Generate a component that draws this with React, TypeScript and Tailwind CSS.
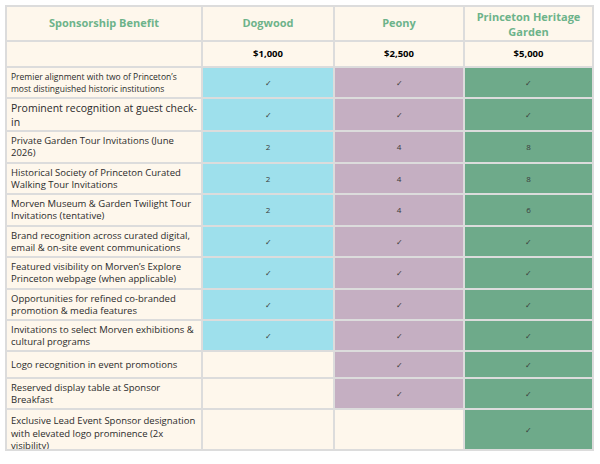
import type { ReactNode } from "react"

type Mark = "✓" | "2" | "4" | "6" | "8" | ""

interface Row {
  label: string
  size?: "sm" | "lg"
  h: string
  clip?: boolean
  values: [Mark, Mark, Mark]
}

const ROWS: Row[] = [
  { label: "Premier alignment with two of Princeton’s most distinguished historic institutions", size: "sm", h: "h-[29px]", values: ["✓", "✓", "✓"] },
  { label: "Prominent recognition at guest check-in", size: "lg", h: "h-[31px]", values: ["✓", "✓", "✓"] },
  { label: "Private Garden Tour Invitations (June 2026)", h: "h-[30px]", values: ["2", "4", "8"] },
  { label: "Historical Society of Princeton Curated Walking Tour Invitations", h: "h-[29px]", values: ["2", "4", "8"] },
  { label: "Morven Museum & Garden Twilight Tour Invitations (tentative)", h: "h-[30px]", values: ["2", "4", "6"] },
  { label: "Brand recognition across curated digital, email & on-site event communications", h: "h-[29px]", values: ["✓", "✓", "✓"] },
  { label: "Featured visibility on Morven’s Explore Princeton webpage (when applicable)", h: "h-[30px]", values: ["✓", "✓", "✓"] },
  { label: "Opportunities for refined co-branded promotion & media features", h: "h-[29px]", values: ["✓", "✓", "✓"] },
  { label: "Invitations to select Morven exhibitions & cultural programs", h: "h-[29px]", values: ["✓", "✓", "✓"] },
  { label: "Logo recognition in event promotions", h: "h-[25px]", values: ["", "✓", "✓"] },
  { label: "Reserved display table at Sponsor Breakfast", h: "h-[29px]", values: ["", "✓", "✓"] },
  { label: "Exclusive Lead Event Sponsor designation with elevated logo prominence (2x visibility)", h: "h-[39px]", clip: true, values: ["", "", "✓"] },
]

const TIER_BG = ["bg-[#9ee0ec]", "bg-[#c5afc2]", "bg-[#6eaa8a]"]

function Cell({ className, children }: { className: string; children?: ReactNode }) {
  return <div className={`flex items-center justify-center overflow-hidden ${className}`}>{children}</div>
}

export default function App() {
  return (
    <div className="min-h-[464px] bg-white pl-[5px] pt-[5px] font-['Open_Sans',sans-serif]">
      <div className="grid w-[589px] grid-cols-[194px_130px_128px_127px] gap-[2px] bg-[#dcdcdc] p-[2px]">
        {/* header */}
        <Cell className="h-[33px] bg-[#fef7ec] text-[11px] font-bold text-[#6db38a]">Sponsorship Benefit</Cell>
        <Cell className="h-[33px] bg-[#fef7ec] text-[11px] font-bold text-[#6db38a]">Dogwood</Cell>
        <Cell className="h-[33px] bg-[#fef7ec] text-[11px] font-bold text-[#6db38a]">Peony</Cell>
        <Cell className="h-[33px] bg-[#fef7ec] px-2 text-center text-[11px] leading-[15px] font-bold text-[#6db38a]">
          Princeton Heritage Garden
        </Cell>

        {/* prices */}
        <Cell className="h-[24px] bg-[#fef7ec]" />
        <Cell className="h-[24px] bg-[#fef7ec] text-[9.5px] font-bold text-black">$1,000</Cell>
        <Cell className="h-[24px] bg-[#fef7ec] text-[9.5px] font-bold text-black">$2,500</Cell>
        <Cell className="h-[24px] bg-[#fef7ec] text-[9.5px] font-bold text-black">$5,000</Cell>

        {ROWS.map((row) => (
          <Row key={row.label} row={row} />
        ))}
      </div>
    </div>
  )
}

function Row({ row }: { row: Row }) {
  const text =
    row.size === "sm"
      ? "text-[8.5px] leading-[12px]"
      : row.size === "lg"
        ? "text-[10.5px] leading-[14px]"
        : row.clip
          ? "text-[9.5px] leading-[12.5px]"
          : "text-[9.5px] leading-[12px]"

  return (
    <>
      <div
        className={`${row.h} flex overflow-hidden bg-[#fef7ec] px-[4px] text-[#2b2b2b] ${text} ${
          row.clip ? "items-start pt-[5px]" : "items-center"
        }`}
      >
        <span>{row.label}</span>
      </div>
      {row.values.map((v, i) => (
        <Cell
          key={i}
          className={`${row.h} ${v === "" ? "bg-[#fef7ec]" : TIER_BG[i]} text-[8px] text-[#3a3a3a]`}
        >
          {v}
        </Cell>
      ))}
    </>
  )
}
